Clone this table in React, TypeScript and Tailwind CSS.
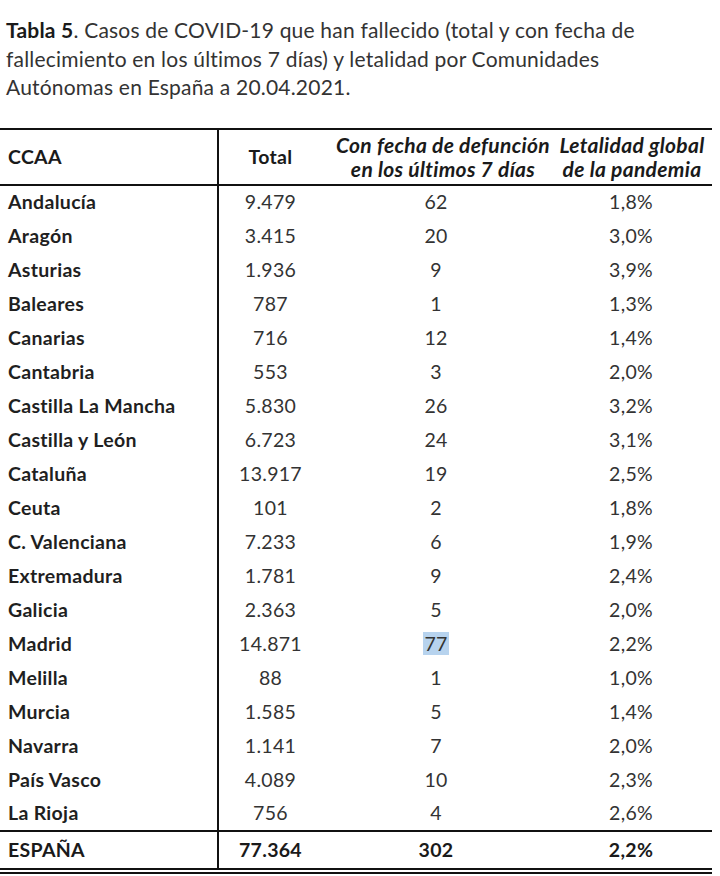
const rows: [string, string, string, string][] = [
  ["Andalucía", "9.479", "62", "1,8%"],
  ["Aragón", "3.415", "20", "3,0%"],
  ["Asturias", "1.936", "9", "3,9%"],
  ["Baleares", "787", "1", "1,3%"],
  ["Canarias", "716", "12", "1,4%"],
  ["Cantabria", "553", "3", "2,0%"],
  ["Castilla La Mancha", "5.830", "26", "3,2%"],
  ["Castilla y León", "6.723", "24", "3,1%"],
  ["Cataluña", "13.917", "19", "2,5%"],
  ["Ceuta", "101", "2", "1,8%"],
  ["C. Valenciana", "7.233", "6", "1,9%"],
  ["Extremadura", "1.781", "9", "2,4%"],
  ["Galicia", "2.363", "5", "2,0%"],
  ["Madrid", "14.871", "77", "2,2%"],
  ["Melilla", "88", "1", "1,0%"],
  ["Murcia", "1.585", "5", "1,4%"],
  ["Navarra", "1.141", "7", "2,0%"],
  ["País Vasco", "4.089", "10", "2,3%"],
  ["La Rioja", "756", "4", "2,6%"],
]

export default function App() {
  return (
    <div className="w-[720px] h-[876px] bg-white overflow-hidden font-['Lato',sans-serif] text-[#2b2b2b]">
      <p className="pl-[6px] pt-[16px] text-[21px] leading-[28.5px] tracking-[0.2px] text-[#333] whitespace-nowrap">
        <span className="font-bold text-[#1a1a1a]">Tabla 5</span>. Casos de COVID-19 que han fallecido (total y con fecha de
        <br />
        fallecimiento en los últimos 7 días) y letalidad por Comunidades
        <br />
        Autónomas en España a 20.04.2021.
      </p>

      <table className="mt-[26px] w-[712px] table-fixed border-collapse text-[19.5px] tracking-[0.3px]">
        <colgroup>
          <col className="w-[218px]" />
          <col className="w-[104px]" />
          <col className="w-[228px]" />
          <col className="w-[162px]" />
        </colgroup>
        <thead>
          <tr className="h-[56px] border-t-2 border-b-2 border-[#111]">
            <th className="pl-[8px] text-left font-bold text-[#1a1a1a]">CCAA</th>
            <th className="border-l-2 border-[#111] text-center font-bold text-[#1a1a1a]">Total</th>
            <th className="pl-[14px] text-center text-[21px] font-bold italic leading-[24px] text-[#1a1a1a] whitespace-nowrap">
              Con fecha de defunción<br />en los últimos 7 días
            </th>
            <th className="pl-[2px] text-center text-[21px] font-bold italic leading-[24px] text-[#1a1a1a] whitespace-nowrap">
              Letalidad global<br />de la pandemia
            </th>
          </tr>
        </thead>
        <tbody>
          {rows.map(([name, total, week, rate]) => (
            <tr key={name} className="h-[34px]">
              <td className="pl-[8px] font-bold text-[#1f1f1f] whitespace-nowrap">{name}</td>
              <td className="border-l-2 border-[#111] text-center text-[#333]">{total}</td>
              <td className="text-center text-[#333]">
                {name === "Madrid" ? <span className="bg-[#b7d3ee] px-[1px]">{week}</span> : week}
              </td>
              <td className="text-center text-[#333]">{rate}</td>
            </tr>
          ))}
          <tr className="h-[40px] border-t-2 border-b-[6px] border-double border-[#111] font-bold text-[#1a1a1a]">
            <td className="pl-[8px]">ESPAÑA</td>
            <td className="border-l-2 border-solid border-[#111] text-center">77.364</td>
            <td className="text-center">302</td>
            <td className="text-center">2,2%</td>
          </tr>
        </tbody>
      </table>
    </div>
  )
}
